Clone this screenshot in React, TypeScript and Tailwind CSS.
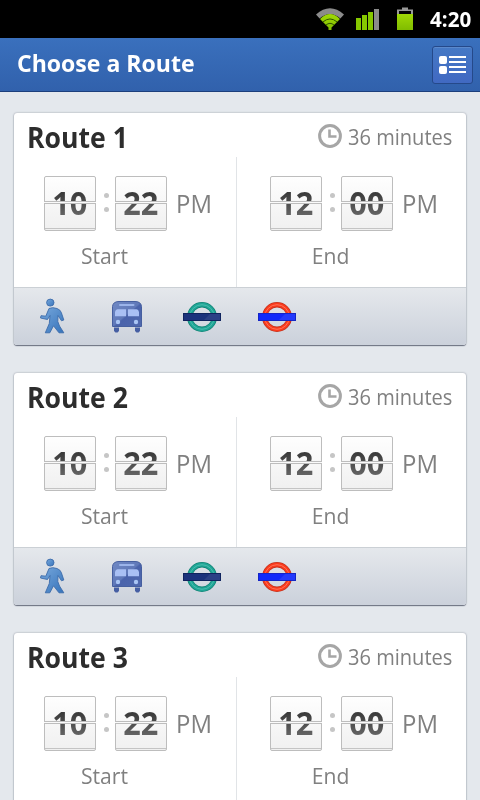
import React from "react";

function WifiIcon() {
  return (
    <svg width="30" height="24" viewBox="0 0 30 24">
      <defs>
        <linearGradient id="wg" x1="0" y1="0" x2="0" y2="1">
          <stop offset="0" stopColor="#a0da06" />
          <stop offset="1" stopColor="#80bc00" />
        </linearGradient>
      </defs>
      <path d="M1 7.500 Q15 -5 29 7.500 L25.400 11.600 Q15 2.300 4.600 11.600Z" fill="#8b8b8b" />
      <path d="M5 11.900 Q15 2 25 11.900 L16.500 20.500 V23 H13.500 V20.500Z" fill="url(#wg)" />
      <path d="M8 14.900 Q15 9 22 14.900 M11 18 Q15 14.700 19 18" fill="none" stroke="#2f5200" strokeWidth="1" />
    </svg>
  );
}

function SignalIcon() {
  return (
    <svg width="24" height="22" viewBox="0 0 24 22">
      <rect x="0" y="9" width="5" height="12" fill="#86c800" />
      <rect x="6" y="6" width="5" height="15" fill="#86c800" />
      <rect x="12" y="3" width="5" height="18" fill="#86c800" />
      <rect x="18" y="0" width="5" height="21" fill="#8b8b8b" />
    </svg>
  );
}

function BatteryIcon() {
  return (
    <svg width="18" height="24" viewBox="0 0 18 24">
      <path d="M6 0.500h6v2h5v5H1v-5h5z" fill="#999" />
      <rect x="3" y="4" width="12" height="3" fill="#050505" />
      <rect x="1" y="7" width="16" height="16" fill="url(#wg)" />
    </svg>
  );
}

function ListIcon() {
  return (
    <svg width="27" height="18" viewBox="0 0 27 18" fill="#fff">
      <rect x="0" y="0" width="8" height="8" rx="2" />
      <rect x="0" y="10" width="8" height="8" rx="2" />
      <rect x="10" y="0" width="17" height="2" />
      <rect x="10" y="5" width="17" height="2" />
      <rect x="10" y="10" width="17" height="2" />
      <rect x="10" y="15" width="17" height="2" />
    </svg>
  );
}

function ClockIcon() {
  return (
    <svg className="shrink-0" width="24" height="24" viewBox="0 0 24 24" fill="none" stroke="#a6a6a6" strokeWidth="3">
      <circle cx="12" cy="12" r="10.400" />
      <path d="M11.500 5.500V12.500H18.500" strokeWidth="2.600" />
    </svg>
  );
}

function WalkIcon() {
  return (
    <svg width="26" height="38" viewBox="0 0 26 38">
      <defs>
        <linearGradient id="walk" x1="0" y1="0" x2="1" y2="1">
          <stop offset="0" stopColor="#78a8dc" />
          <stop offset="1" stopColor="#3674bb" />
        </linearGradient>
      </defs>
      <g fill="url(#walk)" stroke="#3d6caa" strokeWidth="0.900" strokeLinejoin="round">
        <ellipse cx="10.300" cy="4.600" rx="3.700" ry="3.500" />
        <path d="M9 10.500 Q12.500 8.800 17 10.500 Q20.500 11.800 21.300 14.500 L23.800 22 L21.500 22.800 L18 17.500 L17.800 23.500 L19.500 28 L23.800 34.800 H19 L13.500 27.800 L9.800 34.800 H5.300 L9.300 25.500 L10 17.500 L7.500 21.500 L0.500 20 L1 17.700 L5.800 18.200 Z" />
      </g>
    </svg>
  );
}

function BusIcon() {
  return (
    <svg width="32" height="34" viewBox="0 0 32 34">
      <defs>
        <linearGradient id="bus" x1="0" y1="0" x2="1" y2="1">
          <stop offset="0" stopColor="#7089c4" />
          <stop offset="0.500" stopColor="#6079b9" />
          <stop offset="0.540" stopColor="#4a63ab" />
          <stop offset="1" stopColor="#5069ae" />
        </linearGradient>
      </defs>
      <path d="M3 27.500H8V31L6.500 32.500H4.500L3 31ZM24 27.500H29V31L27.500 32.500H25.500L24 31Z" fill="#465fa3" />
      <path d="M1.500 26.500V6.500Q2 1.500 8 1.500H24Q30 1.500 30.500 6.500V26.500Z" fill="url(#bus)" stroke="#465f9f" strokeWidth="1" />
      <rect x="8" y="4" width="15.500" height="2" rx="1" fill="#9bb4ea" />
      <path d="M6.500 9.300H15V16.300H4V12Q4.500 9.300 6.500 9.300ZM17 9.300H25.500Q27.500 9.300 28 12V16.300H17Z" fill="#a9c0f4" />
      <circle cx="7" cy="22" r="2.200" fill="#a9c5f4" />
      <circle cx="25" cy="22" r="2.200" fill="#a9c5f4" />
    </svg>
  );
}

function Roundel({ ring, light, edge, bar, barEdge, shine }: { ring: string; light: string; edge: string; bar: string; barEdge: string; shine: string }) {
  return (
    <svg width="38" height="32" viewBox="0 0 38 32">
      <circle cx="19" cy="16" r="12.300" fill="none" stroke={edge} strokeWidth="5.400" />
      <circle cx="19" cy="16" r="12.300" fill="none" stroke={ring} strokeWidth="3.800" />
      <circle cx="19" cy="16" r="12.300" fill="none" stroke={light} strokeWidth="1" />
      <rect x="0.500" y="12.500" width="37" height="7" fill={bar} stroke={barEdge} />
      <path d="M21 19L27 13H37V19Z" fill={shine} opacity="0.350" />
    </svg>
  );
}

function FlipCard({ value }: { value: string }) {
  return (
    <div className="relative flex h-[55px] w-[52px] justify-center rounded-[2px] border border-[#bdbdbd] bg-linear-to-b from-[#fefefe] to-[#f0f0f0]">
      <span className="mr-[1px] h-[52px] origin-center scale-x-[0.93] bg-linear-to-b from-[#3a3a3a] from-30% to-[#666666] to-75% bg-clip-text text-[33px] leading-[51px] font-bold text-transparent">
        {value}
      </span>
      <div className="absolute -inset-x-px top-[24px] h-[3px] border-y border-[#bdbdbd] bg-[#fafafa]" />
      <div className="absolute inset-x-0 bottom-[1px] h-px bg-[#c4c4c4]" />
    </div>
  );
}

function Time({ hour, minute, label }: { hour: string; minute: string; label: string }) {
  return (
    <div>
      <div className="flex h-[55px]">
        <FlipCard value={hour} />
        <div className="flex w-[19px] flex-col items-center gap-[9px] pt-[17px] pl-[1px]">
          <i className="size-[5px] rounded-full bg-[#c6c6c6]" />
          <i className="size-[5px] rounded-full bg-[#c6c6c6]" />
        </div>
        <FlipCard value={minute} />
        <span className="ml-[9px] origin-left scale-x-[0.92] text-[26px] leading-[54px] text-[#808080]">PM</span>
      </div>
      <div className="mt-[9px] w-[121px] text-center text-[22px] leading-[30px] text-[#808080]">
        <span className="inline-block scale-x-[0.96]">{label}</span>
      </div>
    </div>
  );
}

function RouteCard({ name }: { name: string }) {
  return (
    <section className="h-[232px] w-[452px] shrink-0 overflow-hidden rounded-[3px] bg-white shadow-[0_1px_1px_#6b7180,0_0_2px_#8c939e]">
      <div className="flex h-[44px] items-start justify-between pr-[14px] pl-[13px]">
        <h2 className="origin-left scale-x-[0.95] text-[28px] leading-[48px] font-bold whitespace-nowrap text-[#2d2d2d]">{name}</h2>
        <div className="flex w-[134px] items-start gap-[6px]">
          <div className="pt-[11px]"><ClockIcon /></div>
          <span className="origin-left scale-x-[0.912] text-[22px] leading-[46px] whitespace-nowrap text-[#808080]">36 minutes</span>
        </div>
      </div>
      <div className="flex h-[130px]">
        <div className="w-[223px] border-r border-[#e1e4e7] pt-[19px] pl-[30px]">
          <Time hour="10" minute="22" label="Start" />
        </div>
        <div className="pt-[19px] pl-[33px]">
          <Time hour="12" minute="00" label="End" />
        </div>
      </div>
      <footer className="flex h-[58px] items-center border-t border-[#cbd0d5] bg-linear-to-b from-[#e5e8ec] to-[#cbd1db] pl-[26px]">
        <WalkIcon />
        <div className="ml-[45px]"><BusIcon /></div>
        <div className="ml-[40px]"><Roundel ring="#1fa696" light="#4bbcae" edge="#148477" bar="#1b327c" barEdge="#10245e" shine="#4b5d98" /></div>
        <div className="ml-[37px]"><Roundel ring="#fb3a1c" light="#ff7259" edge="#c33622" bar="#1029fa" barEdge="#1525c5" shine="#4a5dff" /></div>
      </footer>
    </section>
  );
}

export default function App() {
  return (
    <div className="flex h-[800px] w-[480px] flex-col overflow-hidden bg-[#e4e8ed] font-['Open_Sans','Noto_Sans',sans-serif]">
      <div className="flex h-[38px] shrink-0 items-start bg-black pl-[315px] text-white">
        <div className="mt-[7px]"><WifiIcon /></div>
        <div className="mt-[9px] ml-[11px]"><SignalIcon /></div>
        <div className="mt-[7px] ml-[16px]"><BatteryIcon /></div>
        <span className="ml-[16px] origin-left scale-x-[0.98] text-[21px] leading-[38px] font-bold">4:20</span>
      </div>
      <header className="flex h-[54px] shrink-0 items-center justify-between border-b border-[#1c3f7c] bg-linear-to-b from-[#3a70bd] to-[#3161ac] pr-[7px] pl-[17px]">
        <h1 className="mb-[4px] origin-left scale-x-[0.96] text-[24px] leading-[50px] font-bold whitespace-nowrap text-white">Choose a Route</h1>
        <button className="flex h-[38px] w-[41px] items-center justify-center rounded-[3px] border border-[#25498a] bg-linear-to-b from-[#4579c5] to-[#4169c2] shadow-[inset_0_1px_0_#5b89cc]">
          <ListIcon />
        </button>
      </header>
      <main className="flex flex-col items-center gap-[28px] pt-[21px]">
        <RouteCard name="Route 1" />
        <RouteCard name="Route 2" />
        <RouteCard name="Route 3" />
      </main>
    </div>
  );
}
